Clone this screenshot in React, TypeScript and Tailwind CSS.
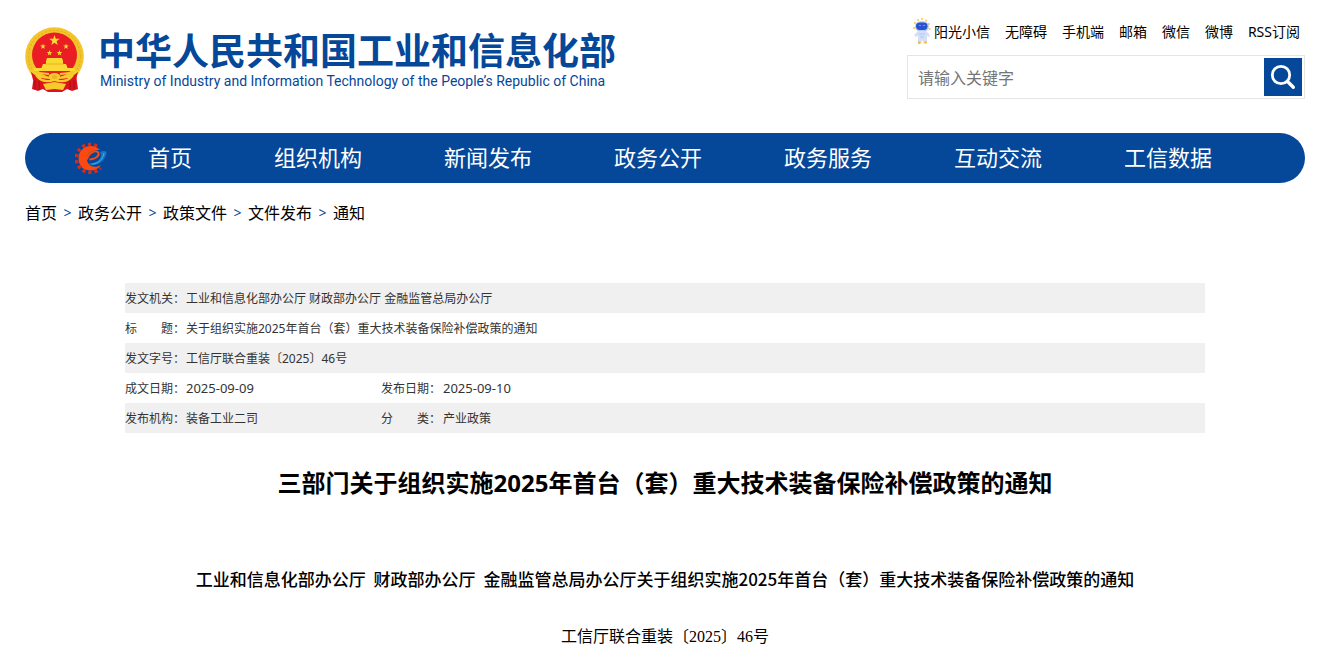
import { useState } from "react";

const topLinks = ["阳光小信", "无障碍", "手机端", "邮箱", "微信", "微博", "RSS订阅"];

const navItems = [
  "首页",
  "组织机构",
  "新闻发布",
  "政务公开",
  "政务服务",
  "互动交流",
  "工信数据",
];

const crumbs = ["首页", "政务公开", "政策文件", "文件发布", "通知"];

const STAR = "M0-5 1.2-1.6 4.8-1.5 1.9.6 2.9 4 0 2-2.9 4-1.9.6-4.8-1.5-1.2-1.6Z";

export default function App() {
  return (
    <div className="min-w-[1180px] bg-white pl-[25px] pr-[37px] pb-2 font-['Noto_Sans','Noto_Sans_CJK_SC',sans-serif] text-black">
      <div className="mx-auto max-w-[1280px]">
        <Header />
        <Nav />
        <Breadcrumb />
        <main className="px-[100px] pt-[54px]">
          <DocumentInfo />
          <Article />
        </main>
      </div>
    </div>
  );
}

function Header() {
  const [keyword, setKeyword] = useState("");

  return (
    <header className="flex h-[133px] items-start justify-between">
      <a href="#" className="flex gap-[13px] pt-[27px] text-[#054798]">
        <Emblem />
        <span className="flex flex-col whitespace-nowrap">
          <span className="pt-[5px] font-['Liberation_Sans','Noto_Sans_CJK_SC',sans-serif] text-[37px] font-bold leading-[42px]">
            中华人民共和国工业和信息化部
          </span>
          <span className="pl-[2px] font-['Roboto',sans-serif] text-sm leading-[14px]">
            Ministry of Industry and Information Technology of the People’s Republic of China
          </span>
        </span>
      </a>

      <div className="w-[398px] pt-[17px]">
        <div className="flex h-[38px] items-start justify-end gap-[15px] pr-[5px] text-sm leading-[30px] whitespace-nowrap">
          {topLinks.map((label, index) => (
            <a key={label} href="#" className="flex">
              {index === 0 && <Mascot />}
              {label}
            </a>
          ))}
        </div>
        <form
          className="flex h-11 items-center border border-[#e5e5e5] pr-[2px]"
          onSubmit={(event) => event.preventDefault()}
        >
          <input
            type="text"
            aria-label="请输入关键字"
            placeholder="请输入关键字"
            value={keyword}
            onChange={(event) => setKeyword(event.target.value)}
            className="h-full min-w-0 flex-1 px-[10px] pt-[2px] text-base outline-none placeholder:text-[#757575]"
          />
          <button type="submit" aria-label="搜索" className="size-[38px] bg-[#054798]">
            <svg viewBox="0 0 38 38" className="size-full" fill="none" stroke="#fff">
              <circle cx="17" cy="17" r="8.7" strokeWidth="2.8" />
              <path d="m23.3 23.3 6 6" strokeWidth="3.4" strokeLinecap="round" />
            </svg>
          </button>
        </form>
      </div>
    </header>
  );
}

function Nav() {
  return (
    <nav className="flex h-[50px] items-center rounded-full bg-[#054798] pl-[50px] text-white">
      <GearLogo />
      {navItems.map((item) => (
        <a key={item} href="#" className="px-[41px] pb-[2px] text-[22px] leading-[48px] whitespace-nowrap">
          {item}
        </a>
      ))}
    </nav>
  );
}

function Breadcrumb() {
  return (
    <ol className="flex h-[46px] items-end text-base leading-8">
      {crumbs.map((crumb, index) => (
        <li key={crumb} className="flex">
          {index > 0 && <span className="w-[21px] text-center text-sm leading-8 text-[#054798]">&gt;</span>}
          <a href="#">{crumb}</a>
        </li>
      ))}
    </ol>
  );
}

function DocumentInfo() {
  return (
    <table className="w-full table-fixed text-left text-xs leading-7 text-[#333]">
      <colgroup>
        <col className="w-[61px]" />
        <col className="w-[195px]" />
        <col className="w-[62px]" />
        <col />
      </colgroup>
      <tbody>
        <tr className="bg-[#f0f0f0]">
          <Label text="发文机关：" />
          <Value text="工业和信息化部办公厅 财政部办公厅 金融监管总局办公厅" span={3} />
        </tr>
        <tr>
          <Label text="标　　题：" />
          <Value text="关于组织实施2025年首台（套）重大技术装备保险补偿政策的通知" span={3} />
        </tr>
        <tr className="bg-[#f0f0f0]">
          <Label text="发文字号：" />
          <Value text="工信厅联合重装〔2025〕46号" span={3} />
        </tr>
        <tr>
          <Label text="成文日期：" />
          <td className="text-[13px]">2025-09-09</td>
          <Label text="发布日期：" />
          <td className="text-[13px]">2025-09-10</td>
        </tr>
        <tr className="bg-[#f0f0f0]">
          <Label text="发布机构：" />
          <Value text="装备工业二司" />
          <Label text="分　　类：" />
          <Value text="产业政策" />
        </tr>
      </tbody>
    </table>
  );
}

function Label({ text }: { text: string }) {
  return (
    <th scope="row" className="pt-[2px] font-normal whitespace-nowrap">
      {text}
    </th>
  );
}

function Value({ text, span = 1 }: { text: string; span?: number }) {
  return (
    <td colSpan={span} className="pt-[2px]">
      {text}
    </td>
  );
}

function Article() {
  return (
    <article className="text-center">
      <h1 className="pt-[30px] text-2xl font-bold leading-10">
        三部门关于组织实施2025年首台（套）重大技术装备保险补偿政策的通知
      </h1>
      <h2 className="pt-[60px] font-['Noto_Sans_CJK_SC',sans-serif] text-[17px] font-medium leading-8 whitespace-nowrap">
        <span className="mr-1">工业和信息化部办公厅</span>{" "}
        <span className="mr-1">财政部办公厅</span>{" "}
        金融监管总局办公厅关于组织实施2025年首台（套）重大技术装备保险补偿政策的通知
      </h2>
      <p className="pt-[26px] font-['Liberation_Serif','Noto_Sans_CJK_SC',serif] text-base leading-8">
        工信厅联合重装〔2025〕46号
      </p>
    </article>
  );
}

function Emblem() {
  return (
    <svg viewBox="0 0 60 65" className="h-[65px] w-[60px] shrink-0" aria-hidden="true">
      <path d="M9 48 7 62l6 2 5-2 5 3h14l5-3 5 2 6-2-2-14Z" fill="#d9141e" />
      <circle cx="29.5" cy="29.5" r="29.3" fill="#f3c52c" />
      <circle cx="29.5" cy="29.5" r="26" fill="none" stroke="#e2a91c" strokeWidth="1" strokeDasharray="2 2" />
      <circle cx="29.5" cy="28" r="22.5" fill="#ea1c24" />
      <g fill="#fbd935">
        <path d={STAR} transform="translate(29.5 13.5) scale(1.1)" />
        <path d={STAR} transform="translate(18 19.5) scale(.6)" />
        <path d={STAR} transform="translate(41 19.5) scale(.6)" />
        <path d={STAR} transform="translate(24.5 26) scale(.6)" />
        <path d={STAR} transform="translate(34.5 26) scale(.6)" />
        <path d="m21 34 1-3h15l1 3v3H21ZM18 37h23l2 5H16ZM9 41h41v3H9Z" />
      </g>
      <path d="M20 37h19" stroke="#e2a91c" strokeWidth=".8" />
      <path d="M6 45c5 4 9 6 14 6l9.5-4 9.5 4c5 0 9-2 14-6l-2 8-11 4H19L8 53Z" fill="#dc151d" />
      <path
        d="M6 43c6 6 12 8 18 8M53 43c-6 6-12 8-18 8M11 48c5 7 12 7 18.5 5C36 55 43 55 48 48M14 46l10 1M45 46l-10 1"
        fill="none"
        stroke="#f8cb2d"
        strokeWidth="2.2"
      />
      <ellipse cx="29.5" cy="50" rx="6" ry="4" fill="#f8cb2d" />
      <ellipse cx="29.5" cy="50" rx="2.6" ry="2" fill="#e9b524" />
      <path d="m18 57 11.5-2L41 57l-3 6-8.5-1-8.5 1Z" fill="#f8cb2d" />
      <path d="M10 53v9M14 54v9M45 54v9M49 53v9" stroke="#a80d15" strokeWidth="1" />
    </svg>
  );
}

function GearLogo() {
  return (
    <svg viewBox="0 0 32 32" className="size-8 shrink-0" fill="none" aria-hidden="true">
      <path
        d="M22 4.2A14 14 0 1 0 25.5 26"
        stroke="#d92b18"
        strokeWidth="3.4"
        strokeDasharray="3.2 2.9"
      />
      <path
        d="M25 8C18 0 3 4 3.5 17 4 30 20 32 26 23c-5 3-11 2-13-2C9 13 16 7 25 8Z"
        fill="#fa4a12"
      />
      <path d="M12 17.5C13 11 21 7 23.5 11c1 3-3 6-9 6.5" stroke="#fa4a12" strokeWidth="2" />
      <path d="M14 21.500c7 0 12.500-4 12-9-.2-1-.5-1.500-1-2.500 3-1.500 5-1.500 6.500 0 0 7-8 15-17 13Z" fill="#1577c5" />
      <path d="M17 22c6 0 11-5 12-11" stroke="#3eb3ed" strokeWidth="1" />
    </svg>
  );
}

function Mascot() {
  return (
    <svg viewBox="0 0 18 28" className="mr-[3px] h-7 w-[18px]" aria-hidden="true">
      <g fill="#ffc933">
        <circle cx="5" cy="3" r="1" />
        <circle cx="9" cy="2" r="1" />
        <circle cx="13" cy="3.5" r="1" />
        <circle cx="2" cy="6" r="1" />
        <circle cx="16" cy="7" r="1" />
        <circle cx="1" cy="11" r="1" />
        <circle cx="16.5" cy="12" r="1" />
      </g>
      <ellipse cx="9" cy="9.5" rx="7" ry="5.5" fill="#b9cbf5" />
      <rect x="3" y="5.5" width="11.5" height="7.5" rx="3.7" fill="#2855cf" />
      <path d="M6 8.5h2M10 8.5h2" stroke="#6f9bf5" />
      <path d="m5 14-4 4 2 2 2-1v6l3 2 1-4 2 4 3-2v-6l2 1 1-2-4-4Z" fill="#d5e0f8" />
      <path d="M6 17h6M7 20h4" stroke="#b0c4ee" />
      <path d="m5 24 3 1-1 2H5ZM11 25l3-1v2l-2 1Z" fill="#f8bf38" />
    </svg>
  );
}
